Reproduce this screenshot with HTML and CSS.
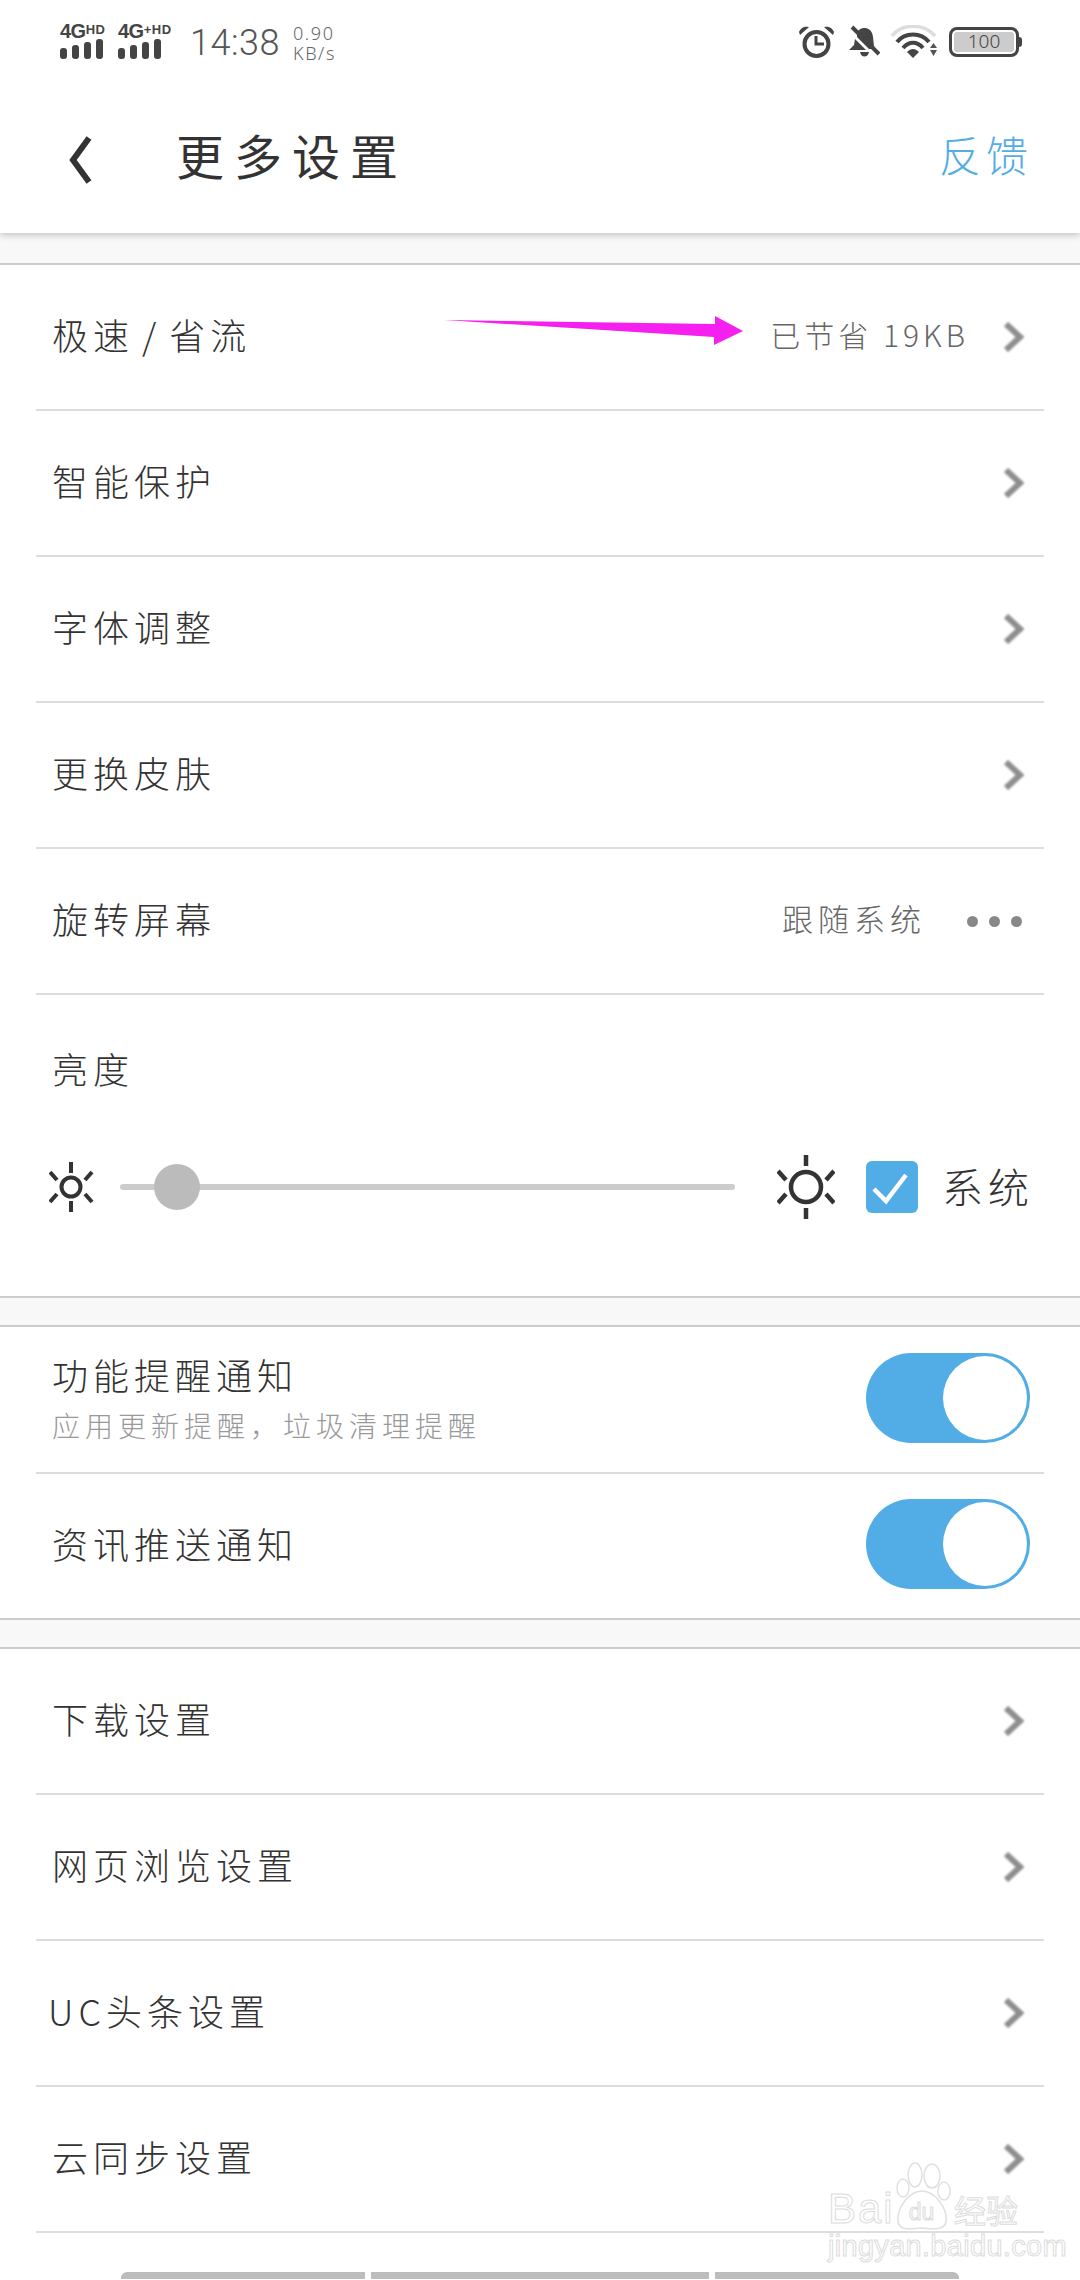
FILE: index.html
```html
<!DOCTYPE html>
<html lang="zh-CN">
<head>
<meta charset="utf-8">
<title>更多设置</title>
<link rel="stylesheet" href="styles.css">
</head>
<body>
<div class="page">
  <header class="top">
    <div class="status">
      <div class="net">
        <div class="sim"><div class="sim-label">4G<small>HD</small></div><div class="bars"><i class="b1"></i><i class="b2"></i><i class="b3"></i><i class="b4"></i></div></div>
        <div class="sim"><div class="sim-label">4G<small>+HD</small></div><div class="bars"><i class="b1"></i><i class="b2"></i><i class="b3"></i><i class="b4"></i></div></div>
        <div class="clock">14:38</div>
        <div class="speed"><span>0.90</span><span>KB/s</span></div>
      </div>
      <div class="sys">
        <svg class="ic-alarm" viewBox="0 0 35 33" width="35" height="33"><circle cx="17.5" cy="19" r="12" fill="none" stroke="#444" stroke-width="4"/><path d="M17 11v8h8" fill="none" stroke="#444" stroke-width="3"/><path d="M0 7C2 2 6 1 10 2L1 10zM35 7C33 2 29 1 25 2L34 10z" fill="#444"/></svg>
        <svg class="ic-bell" viewBox="0 0 31 33" width="31" height="33"><path d="M8 8C10 2 20 1 23 8C25 13 24 20 26 24H20L8 12zM6 14L17 25H0L5 20zM11 27h9c-1 6-8 6-9 0z" fill="#444"/><path d="M3 2L30 29" stroke="#444" stroke-width="4"/></svg>
        <svg class="ic-wifi" viewBox="0 0 46 33" width="46" height="33"><path d="M1 11C11 -2 33 -2 44 11" fill="none" stroke="#ddd" stroke-width="3.5"/><path d="M6 17C14 7 30 7 38 17" fill="none" stroke="#444" stroke-width="4"/><path d="M12 23C18 16 26 16 32 23" fill="none" stroke="#444" stroke-width="4"/><path d="M16 27C20 23 24 23 28 27L22 33z" fill="#444"/><path d="M39 23h7l-3.500-5zM39 25h7l-3.500 6z" fill="#555"/></svg>
        <div class="battery"><div class="cell">100</div><i class="nib"></i></div>
      </div>
    </div>
    <div class="toolbar">
      <svg class="back" viewBox="0 0 23 48" width="23" height="48"><path d="M20 2L4 24L20 46" fill="none" stroke="#333" stroke-width="6"/></svg>
      <h1 class="title">更多设置</h1>
      <a class="feedback">反馈</a>
    </div>
  </header>

  <div class="gap first"></div>
  <section class="group">
    <div class="row"><span class="label">极速<span class="slash">/</span>省流</span><span class="value saved">已节省 19KB</span><svg class="chev" viewBox="0 0 21 30" width="21" height="30"><path d="M3 2L17 15L3 28" fill="none" stroke="#8e8e8e" stroke-width="6"/></svg></div>
    <div class="row"><span class="label">智能保护</span><svg class="chev" viewBox="0 0 21 30" width="21" height="30"><path d="M3 2L17 15L3 28" fill="none" stroke="#8e8e8e" stroke-width="6"/></svg></div>
    <div class="row"><span class="label">字体调整</span><svg class="chev" viewBox="0 0 21 30" width="21" height="30"><path d="M3 2L17 15L3 28" fill="none" stroke="#8e8e8e" stroke-width="6"/></svg></div>
    <div class="row"><span class="label">更换皮肤</span><svg class="chev" viewBox="0 0 21 30" width="21" height="30"><path d="M3 2L17 15L3 28" fill="none" stroke="#8e8e8e" stroke-width="6"/></svg></div>
    <div class="row"><span class="label">旋转屏幕</span><span class="value follow">跟随系统</span><div class="dots"><i></i><i></i><i></i></div></div>
    <div class="bright">
      <div class="label bright-title">亮度</div>
      <div class="bright-row">
        <svg class="sun-s" viewBox="0 0 45 50" width="45" height="50"><circle cx="22" cy="25" r="9.500" fill="none" stroke="#333" stroke-width="4"/><path d="M22 0v11M22 39v11M1 10l7 8M43 10l-7 8M1 40l7-8M43 40l-7-8" stroke="#333" stroke-width="4" fill="none"/></svg>
        <div class="track"><i class="thumb"></i></div>
        <svg class="sun-l" viewBox="0 0 58 64" width="58" height="64"><circle cx="29" cy="32" r="15" fill="none" stroke="#333" stroke-width="4.500"/><path d="M29 0v11M29 53v11M1 16l8 9M57 16l-8 9M1 48l8-9M57 48l-8-9" stroke="#333" stroke-width="4.500" fill="none"/></svg>
        <div class="check"><svg viewBox="0 0 52 52" width="52" height="52"><path d="M8 28L20 40L40 14" fill="none" stroke="#fff" stroke-width="4.500"/></svg></div>
        <span class="label sys-label">系统</span>
      </div>
    </div>
  </section>
  <div class="gap"></div>
  <section class="group">
    <div class="row tall"><div class="stack"><span class="label">功能提醒通知</span><span class="sub">应用更新提醒，垃圾清理提醒</span></div><div class="toggle"><i></i></div></div>
    <div class="row tall last"><span class="label">资讯推送通知</span><div class="toggle"><i></i></div></div>
  </section>
  <div class="gap"></div>
  <section class="group open">
    <div class="row"><span class="label">下载设置</span><svg class="chev" viewBox="0 0 21 30" width="21" height="30"><path d="M3 2L17 15L3 28" fill="none" stroke="#8e8e8e" stroke-width="6"/></svg></div>
    <div class="row"><span class="label">网页浏览设置</span><svg class="chev" viewBox="0 0 21 30" width="21" height="30"><path d="M3 2L17 15L3 28" fill="none" stroke="#8e8e8e" stroke-width="6"/></svg></div>
    <div class="row"><span class="label uc">UC头条设置</span><svg class="chev" viewBox="0 0 21 30" width="21" height="30"><path d="M3 2L17 15L3 28" fill="none" stroke="#8e8e8e" stroke-width="6"/></svg></div>
    <div class="row"><span class="label">云同步设置</span><svg class="chev" viewBox="0 0 21 30" width="21" height="30"><path d="M3 2L17 15L3 28" fill="none" stroke="#8e8e8e" stroke-width="6"/></svg></div>
  </section>
  <div class="scrollbits"><i></i><i></i><i></i></div>

  <svg class="arrow" viewBox="0 0 300 30" width="300" height="30"><path d="M0 4L271 8L271 0L299 15L270 29L270 21z" fill="#f520f0"/></svg>
  <div class="mark">
    <svg class="paw" viewBox="0 0 62 72" width="62" height="72"><g fill="#fff" stroke="#e0e0e0" stroke-width="1.500"><ellipse cx="13" cy="28" rx="6" ry="9"/><ellipse cx="25" cy="15" rx="7" ry="12"/><ellipse cx="42" cy="16" rx="8" ry="12"/><ellipse cx="54" cy="31" rx="6" ry="9"/><path d="M32 31C46 31 58 50 56 62C54 71 42 69 32 68C20 69 10 71 8 62C6 50 18 31 32 31z"/></g></svg>
    <div class="mark-top"><span class="mark-bai">Bai</span><span class="mark-du">du</span><span class="mark-cn">经验</span></div>
    <div class="mark-url">jingyan.baidu.com</div>
  </div>
</div>
</body>
</html>
```
FILE: styles.css
```css
* { box-sizing: border-box; }
html, body { margin: 0; padding: 0; background: #fff; }
i { display: block; }
.page {
  position: relative;
  width: 1080px;
  height: 2280px;
  overflow: hidden;
  background: #fff;
  font-family: "Noto Sans CJK SC", "Noto Sans", sans-serif;
  font-weight: 300;
  color: #333;
}
.top {
  position: relative;
  z-index: 1;
  height: 233px;
  background: #fff;
  box-shadow: 0 2px 7px rgba(0, 0, 0, .22);
}
.status {
  height: 84px;
  padding: 22px 60px 0 60px;
  display: flex;
  justify-content: space-between;
  align-items: flex-start;
}
.net { display: flex; align-items: flex-start; }
.sim { width: 58px; }
.sim-label {
  font-family: "Liberation Sans", sans-serif;
  font-weight: 700;
  font-size: 20px;
  line-height: 15px;
  letter-spacing: -.5px;
  color: #444;
  white-space: nowrap;
}
.sim-label small { font-size: 13px; vertical-align: 4px; letter-spacing: .5px; }
.bars { display: flex; gap: 5px; align-items: flex-end; height: 20px; }
.bars i { width: 7px; background: #444; border-radius: 3px; }
.b1 { height: 11px; }
.b2 { height: 14px; }
.b3 { height: 17px; }
.b4 { height: 20px; }
.clock {
  margin-left: 14px;
  font-family: Roboto, sans-serif;
  font-weight: 300;
  font-size: 36px;
  line-height: 42px;
  letter-spacing: .5px;
  color: #555;
}
.speed {
  margin-left: 13px;
  margin-top: 1px;
  display: flex;
  flex-direction: column;
  font-family: "Noto Sans", sans-serif;
  font-weight: 300;
  font-size: 18px;
  line-height: 20px;
  letter-spacing: 1.6px;
  color: #666;
}
.sys { display: flex; align-items: flex-start; margin-top: 3px; }
.ic-alarm { margin-right: 15px; }
.ic-bell { margin-right: 11px; }
.ic-wifi { margin-right: 12px; }
.battery { display: flex; align-items: center; margin-top: 2px; margin-right: -2px; }
.cell {
  width: 70px;
  height: 30px;
  border: 3px solid #444;
  border-radius: 8px;
  background: #ccc;
  box-shadow: inset 0 0 0 2px #fff;
  font-family: "Noto Sans", sans-serif;
  font-weight: 300;
  font-size: 19px;
  line-height: 23px;
  text-align: center;
  color: #444;
}
.nib { width: 3px; height: 10px; background: #444; border-radius: 0 3px 3px 0; }
.toolbar { display: flex; align-items: center; height: 149px; padding: 0 52px 0 69px; }
.back { flex: none; margin-top: 2px; }
.title {
  flex: 1;
  margin: 0 0 10px 84px;
  font-size: 48px;
  line-height: 60px;
  font-weight: 400;
  letter-spacing: 10px;
  color: #333;
}
.feedback { font-size: 42px; line-height: 52px; letter-spacing: 5px; margin: 0 -5px 10px 0; color: #52ade6; }
.gap { height: 27px; background: #f8f8f8; }
.gap.first { height: 30px; }
.group { border-top: 2px solid #ccc; border-bottom: 2px solid #ccc; }
.group.open { border-bottom: 0; }
.row {
  height: 146px;
  margin: 0 36px;
  padding: 0 20px 0 16px;
  display: flex;
  align-items: center;
  border-bottom: 2px solid #ddd;
}
.tall { height: 147px; }
.last { border-bottom: 0; height: 144px; }
.label {
  margin-bottom: 6px;
  font-size: 36px;
  line-height: 44px;
  letter-spacing: 5px;
  color: #333;
  white-space: nowrap;
}
.slash { margin: 0 8px; }
.uc { margin-left: -4px; }
.value { margin-left: auto; margin-bottom: 6px; color: #666; font-size: 31px; line-height: 40px; white-space: nowrap; }
.saved { letter-spacing: 4px; margin-right: 34px; font-size: 30px; }
.follow { letter-spacing: 5px; margin-right: 41px; }
.chev { flex: none; margin-left: auto; filter: blur(.8px); }
.saved + .chev { margin-left: 0; }
.dots { display: flex; gap: 11px; margin-right: 2px; }
.dots i { width: 11px; height: 11px; border-radius: 50%; background: #888; }
.bright { height: 301px; padding: 53px 0 0 52px; }
.bright-title { margin-bottom: 0; line-height: 40px; }
.bright-row {
  display: flex;
  align-items: center;
  height: 64px;
  margin: 67px 0 0 -3px;
}
.sun-s { flex: none; }
.track {
  position: relative;
  flex: none;
  width: 615px;
  height: 6px;
  margin-left: 26px;
  border-radius: 3px;
  background: #ccc;
}
.thumb {
  position: absolute;
  left: 34px;
  top: -20px;
  width: 46px;
  height: 46px;
  border-radius: 50%;
  background: #bbb;
}
.sun-l { flex: none; margin-left: 42px; }
.check {
  flex: none;
  width: 52px;
  height: 52px;
  margin-left: 31px;
  border-radius: 6px;
  background: #52ade6;
}
.check svg { display: block; }
.sys-label { margin: 0 0 4px 24px; font-size: 41px; letter-spacing: 5px; }
.stack { display: flex; flex-direction: column; margin-bottom: 5px; }
.stack .label { margin-bottom: 0; }
.sub { margin-top: 11px; font-size: 28px; line-height: 36px; letter-spacing: 5px; color: #999; white-space: nowrap; }
.toggle {
  flex: none;
  margin: 0 -6px 4px auto;
  width: 164px;
  height: 90px;
  padding: 3px;
  display: flex;
  justify-content: flex-end;
  border-radius: 45px;
  background: #52ade6;
}
.toggle i { width: 84px; height: 84px; border-radius: 50%; background: #fff; }
.scrollbits { display: flex; gap: 6px; margin-top: 39px; padding: 0 121px; height: 7px; }
.scrollbits i { background: #bdbdbd; }
.scrollbits i:nth-child(1) { width: 244px; border-radius: 6px 0 0 0; }
.scrollbits i:nth-child(2) { width: 338px; }
.scrollbits i:nth-child(3) { width: 244px; border-radius: 0 6px 0 0; }
.arrow { position: absolute; left: 444px; top: 316px; }
.mark { position: absolute; left: 828px; top: 2165px; width: 200px; height: 95px; }
.paw { position: absolute; left: 62px; top: -5px; }
.mark-top { position: absolute; left: 0; top: 22px; width: 190px; display: flex; align-items: center; height: 44px; }
.mark-bai, .mark-du, .mark-cn, .mark-url {
  color: #fff;
  -webkit-text-stroke: 1px #dcdcdc;
  font-family: "Liberation Sans", sans-serif;
  font-weight: 400;
}
.mark-bai { font-size: 42px; line-height: 44px; letter-spacing: 2px; }
.mark-du { position: relative; top: 3px; margin-left: 14px; font-size: 23px; line-height: 44px; }
.mark-cn { margin-left: auto; font-family: "Noto Sans CJK SC", sans-serif; font-size: 32px; line-height: 44px; }
.mark-url { position: absolute; left: 0; top: 66px; font-size: 29px; line-height: 30px; letter-spacing: .3px; white-space: nowrap; }
```
